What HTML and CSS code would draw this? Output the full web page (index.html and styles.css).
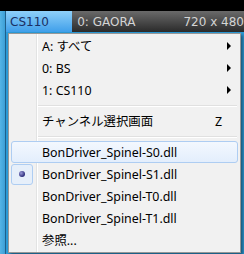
FILE: index.html
```html
<!DOCTYPE html>
<html lang="ja">

<head>
    <meta charset="UTF-8">
    <meta name="viewport" content="width=device-width, initial-scale=1.0">
    <title>TVTest menu</title>
    <link rel="stylesheet" href="styles.css">
</head>

<body>

    <div class="top-band"></div>

    <div class="status-bar">
        <div class="status-cell channel">CS110</div>
        <div class="status-cell service">
            <span>0: GAORA</span>
            <span class="video-size">720 x 480</span>
        </div>
    </div>

    <div class="menu">
        <div class="item"><span class="icon"></span><span class="label">A: すべて</span><span class="arrow"></span></div>
        <div class="item"><span class="icon"></span><span class="label">0: BS</span><span class="arrow"></span></div>
        <div class="item"><span class="icon"></span><span class="label">1: CS110</span><span class="arrow"></span></div>
        <div class="separator"></div>
        <div class="item"><span class="icon"></span><span class="label">チャンネル選択画面</span><span class="shortcut">Z</span></div>
        <div class="separator"></div>
        <div class="item hover"><span class="icon"></span><span class="label">BonDriver_Spinel-S0.dll</span></div>
        <div class="item"><span class="icon checked"><span class="dot"></span></span><span class="label">BonDriver_Spinel-S1.dll</span></div>
        <div class="item"><span class="icon"></span><span class="label">BonDriver_Spinel-T0.dll</span></div>
        <div class="item"><span class="icon"></span><span class="label">BonDriver_Spinel-T1.dll</span></div>
        <div class="item"><span class="icon"></span><span class="label">参照...</span></div>
    </div>

</body>

</html>
```

FILE: styles.css
```css
body {
    margin: 0;
    width: 244px;
    height: 254px;
    overflow: hidden;
    background: linear-gradient(to right, #55b4e6 0, #3d9fd6 5px, #1f5f8a 5px, #1f5f8a 6px, #2c9bd8 6px);
    font-family: "Noto Sans", "Noto Sans CJK JP", sans-serif;
}

.top-band {
    height: 11px;
    background-color: #000;
}

.status-bar {
    display: flex;
    height: 21px;
    margin-left: 6px;
    white-space: nowrap;
    font-family: "DejaVu Sans", sans-serif;
    font-size: 12px;
}

.status-cell {
    display: flex;
    align-items: center;
    padding-left: 4px;
}

.channel {
    width: 85px;
    background: linear-gradient(#8fd0f9, #3f9fea);
    color: #1b2f63;
}

.service {
    flex: 1;
    padding-left: 5px;
    background: linear-gradient(#6a6a6a, #2a2a2a);
    color: #d4d4d4;
}

.video-size {
    margin-left: 48px;
}

.menu {
    width: 231px;
    margin: 1px 0 0 8px;
    padding: 1px 0;
    border: 1px solid #979797;
    background: linear-gradient(to right, #f1f1f1 27px, #e2e3e3 27px, #e2e3e3 28px, #fff 28px, #fff 29px, #f1f1f1 29px);
    box-shadow: 2px 2px 3px rgba(0, 0, 0, 0.45);
    font-size: 12.4px;
    color: #000;
}

.item {
    display: flex;
    align-items: center;
    height: 22px;
    margin: 0 2px;
    box-sizing: border-box;
}

.item.hover {
    border: 1px solid #aecdf2;
    border-radius: 3px;
    background: linear-gradient(#f3f8fe, #e3eefc);
}

.item.hover .icon {
    margin-left: -1px;
}

.icon {
    display: flex;
    align-items: center;
    justify-content: center;
    width: 22px;
    height: 21px;
    margin-right: 9px;
    box-sizing: border-box;
}

.icon.checked {
    border: 1px solid #aecdf2;
    border-radius: 3px;
    background-color: #e6effa;
}

.dot {
    width: 6px;
    height: 6px;
    border-radius: 50%;
    background: radial-gradient(circle at 35% 35%, #9a9ad8, #2c2c7a 70%);
}

.label {
    flex: 1;
    white-space: nowrap;
}

.arrow {
    width: 0;
    height: 0;
    margin-right: 7px;
    border-left: 4px solid #000;
    border-top: 4px solid transparent;
    border-bottom: 4px solid transparent;
}

.shortcut {
    margin-right: 16px;
}

.separator {
    height: 2px;
    margin: 4px 3px 3px 29px;
    border-top: 1px solid #e0e0e0;
    border-bottom: 1px solid #fff;
    box-sizing: border-box;
}
```
